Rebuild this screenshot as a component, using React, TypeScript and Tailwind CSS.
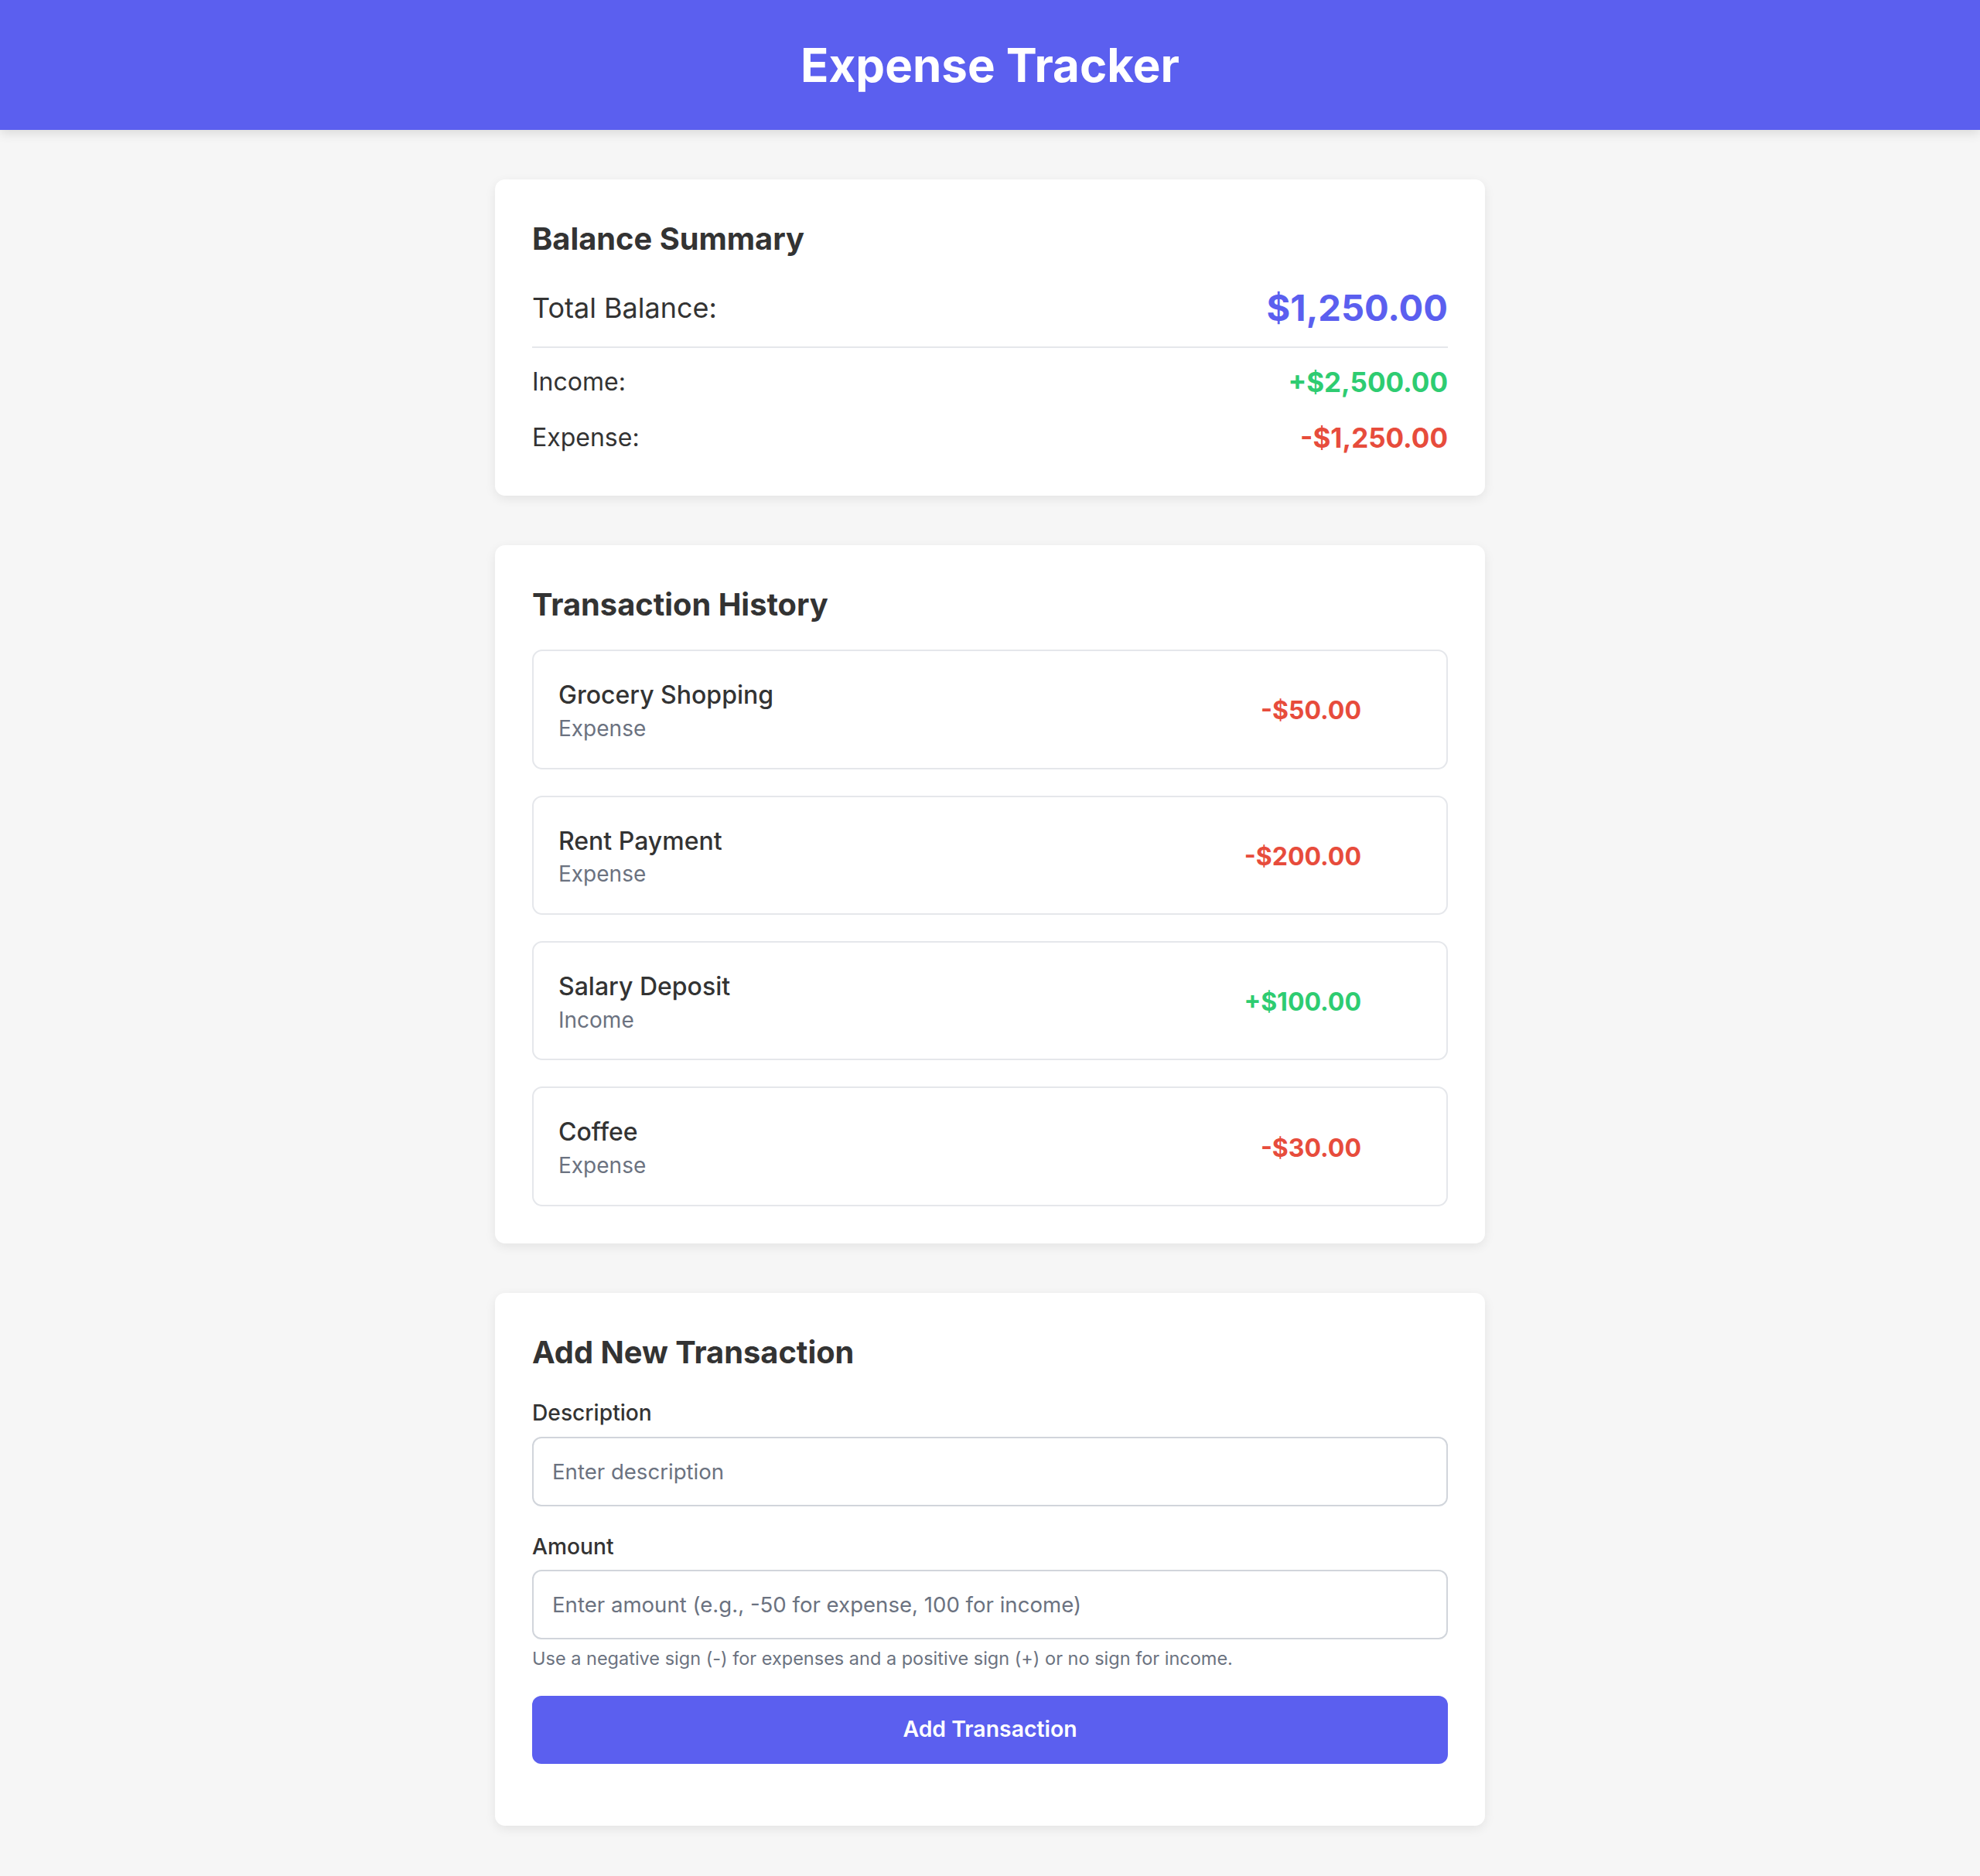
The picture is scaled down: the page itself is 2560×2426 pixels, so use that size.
import { useState } from "react";

type Tx = { id: number; name: string; kind: "Income" | "Expense"; amount: number };

const initial: Tx[] = [
  { id: 1, name: "Grocery Shopping", kind: "Expense", amount: -50 },
  { id: 2, name: "Rent Payment", kind: "Expense", amount: -200 },
  { id: 3, name: "Salary Deposit", kind: "Income", amount: 100 },
  { id: 4, name: "Coffee", kind: "Expense", amount: -30 },
];

const money = (n: number) =>
  "$" + Math.abs(n).toLocaleString("en-US", { minimumFractionDigits: 2, maximumFractionDigits: 2 });

export default function App() {
  const [txs] = useState<Tx[]>(initial);
  const [desc, setDesc] = useState("");
  const [amount, setAmount] = useState("");

  return (
    <div className="min-h-screen bg-[#f6f6f6] text-[#333] font-['Inter',sans-serif]">
      {/* Header */}
      <header className="relative z-10 h-[168px] flex items-center justify-center bg-[#5b5fef] shadow-[0_4px_14px_rgba(0,0,0,0.12)]">
        <h1 className="text-[60px] font-bold text-white leading-none">Expense Tracker</h1>
      </header>

      <main className="w-[1280px] mx-auto py-16 flex flex-col gap-16">
        {/* Balance summary */}
        <section className="bg-white rounded-[13px] p-12 shadow-[0_4px_14px_rgba(0,0,0,0.08)]">
          <h2 className="text-[39.8px] font-bold leading-[57.6px] mb-6">Balance Summary</h2>
          <div className="h-[72px] flex items-center justify-between">
            <span className="text-[36px] leading-[52px]">Total Balance:</span>
            <span className="text-[47px] font-bold leading-[72px] text-[#5b5fef]">$1,250.00</span>
          </div>
          <div className="mt-[14px] h-[2px] bg-[#e5e7eb]" />
          <div className="mt-[17px] flex flex-col gap-[18px]">
            <div className="h-[54px] flex items-center justify-between">
              <span className="text-[32px] leading-[48px]">Income:</span>
              <span className="text-[35px] font-bold leading-[52px] text-[#2ecc71]">+$2,500.00</span>
            </div>
            <div className="h-[54px] flex items-center justify-between">
              <span className="text-[32px] leading-[48px]">Expense:</span>
              <span className="text-[35px] font-bold leading-[52px] text-[#e74c3c]">-$1,250.00</span>
            </div>
          </div>
        </section>

        {/* Transaction history */}
        <section className="bg-white rounded-[13px] p-12 shadow-[0_4px_14px_rgba(0,0,0,0.08)]">
          <h2 className="text-[39.8px] font-bold leading-[57.6px] mb-[30px]">Transaction History</h2>
          <div className="flex flex-col gap-[34px]">
            {txs.map(t => (
              <div key={t.id}
                className="flex items-center border-2 border-[#e5e7eb] rounded-[13px] px-8 pt-[34px] pb-[30px]">
                <div className="flex-1 flex flex-col">
                  <span className="text-[32px] font-medium leading-[45.6px]">{t.name}</span>
                  <span className="text-[28px] leading-[40.8px] text-[#6b7280]">{t.kind}</span>
                </div>
                <span className={`text-[32px] font-bold leading-[1.5] ${t.amount < 0 ? "text-[#e74c3c]" : "text-[#2ecc71]"}`}>
                  {t.amount < 0 ? "-" : "+"}{money(t.amount)}
                </span>
                <button className="invisible ml-8 w-[46px] h-[46px]">×</button>
              </div>
            ))}
          </div>
        </section>

        {/* Add transaction */}
        <section className="bg-white rounded-[13px] p-12 shadow-[0_4px_14px_rgba(0,0,0,0.08)]">
          <h2 className="text-[39.8px] font-bold leading-[57.6px] mb-[29px]">Add New Transaction</h2>
          <form onSubmit={e => e.preventDefault()} className="flex flex-col mb-8">
            <label className="text-[28.2px] font-medium leading-[43.2px] mb-2">Description</label>
            <input
              value={desc} onChange={e => setDesc(e.target.value)}
              placeholder="Enter description"
              className="h-[90px] px-6 border-2 border-[#d1d5db] rounded-[12px] text-[27.6px] outline-none placeholder:text-[#6b7280]"
            />
            <label className="mt-[31px] text-[28.2px] font-medium leading-[43.2px] mb-2">Amount</label>
            <input
              value={amount} onChange={e => setAmount(e.target.value)}
              placeholder="Enter amount (e.g., -50 for expense, 100 for income)"
              className="h-[90px] px-6 border-2 border-[#d1d5db] rounded-[12px] text-[27.6px] outline-none placeholder:text-[#6b7280]"
            />
            <p className="mt-[7px] text-[23.5px] leading-[36px] text-[#6b7280]">
              Use a negative sign (-) for expenses and a positive sign (+) or no sign for income.
            </p>
            <button type="submit"
              className="mt-[30px] h-[88px] rounded-[12px] bg-[#5b5fef] text-white text-[28.4px] font-semibold">
              Add Transaction
            </button>
          </form>
        </section>
      </main>
    </div>
  );
}
